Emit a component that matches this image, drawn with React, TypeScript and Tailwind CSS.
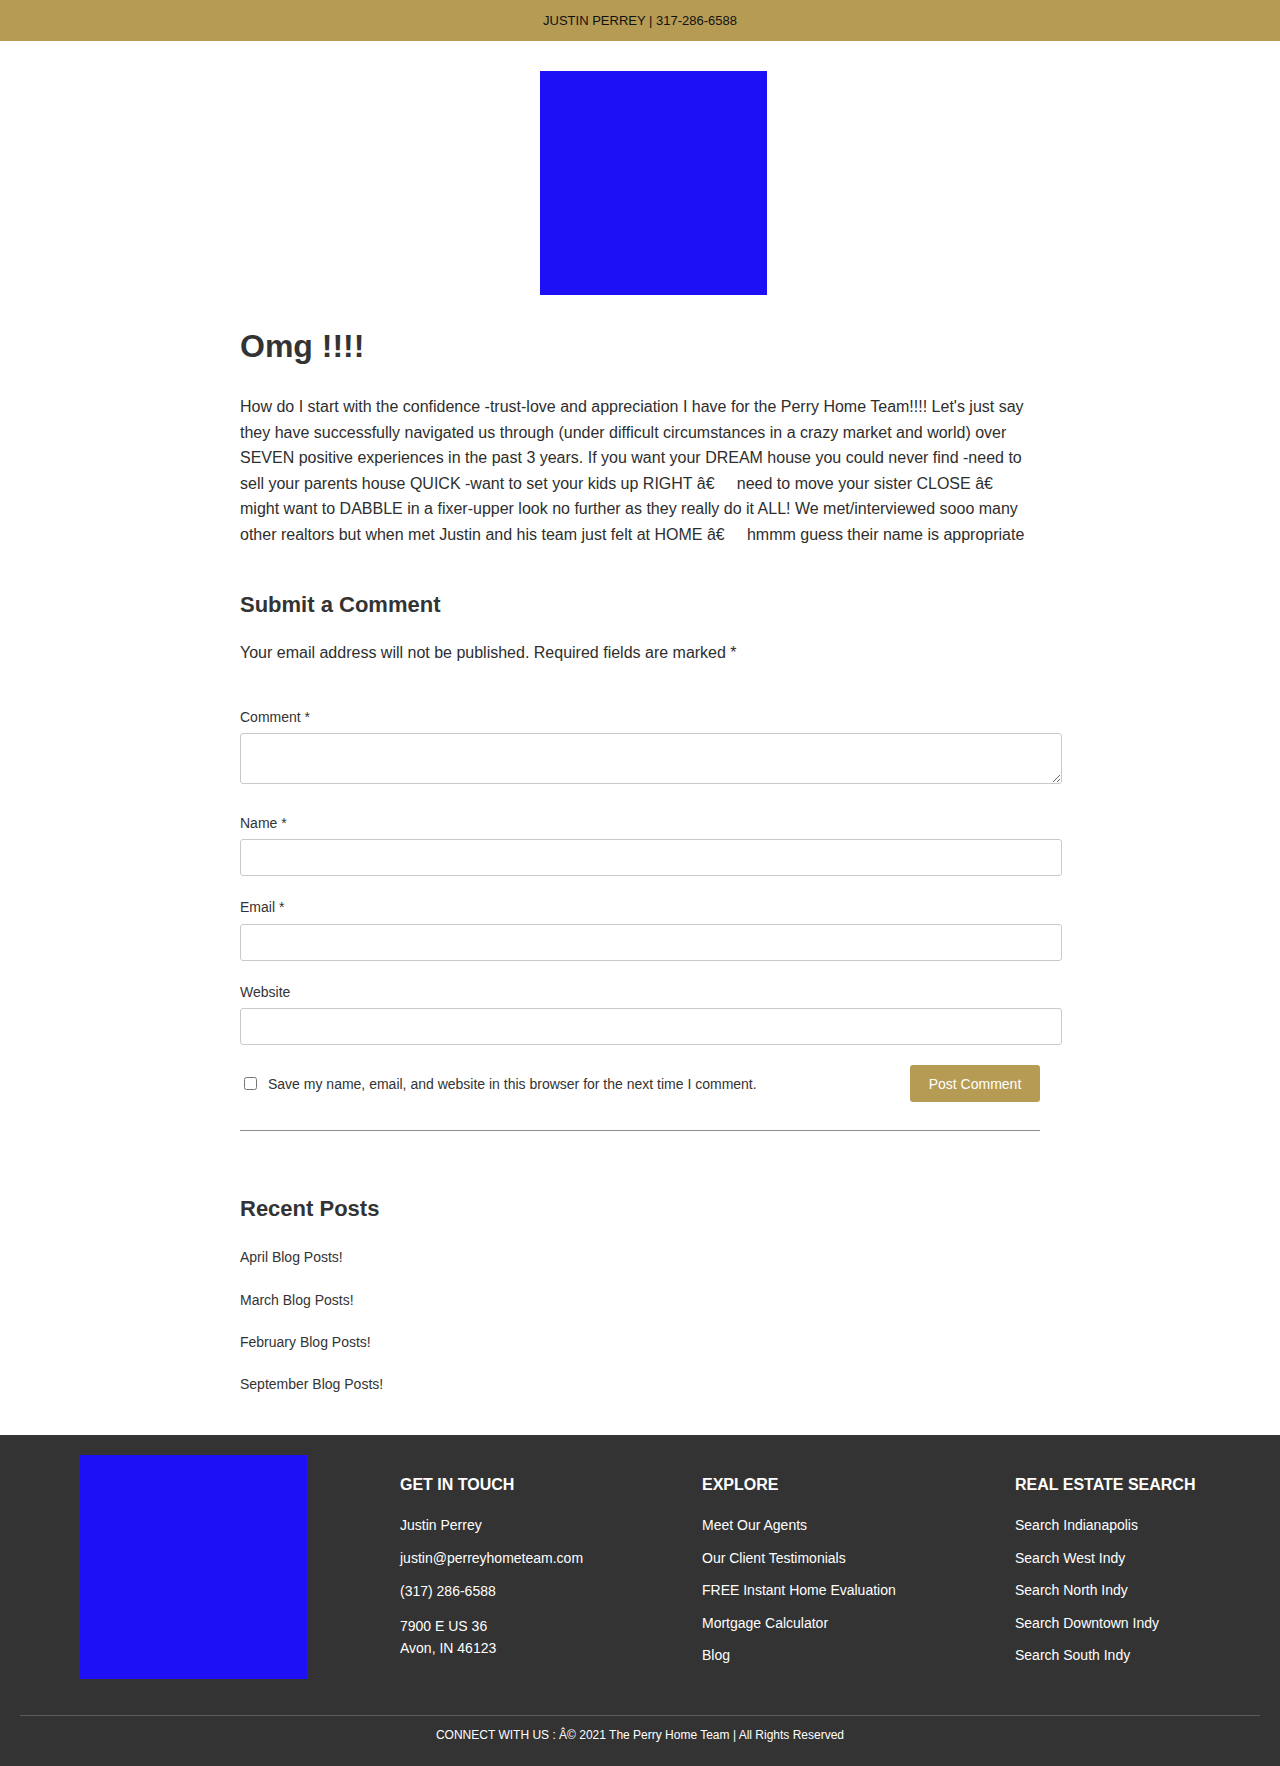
import React from "react";

const NB = "\u00a0\u00a0\u00a0\u00a0";

export default function App() {
  const paraLines = [
    "How do I start with the confidence -trust-love and appreciation I have for the Perry Home Team!!!! Let's just say",
    "they have successfully navigated us through (under difficult circumstances in a crazy market and world) over",
    "SEVEN positive experiences in the past 3 years. If you want your DREAM house you could never find -need to",
    `sell your parents house QUICK -want to set your kids up RIGHT â€${NB} need to move your sister CLOSE â€`,
    "might want to DABBLE in a fixer-upper look no further as they really do it ALL! We met/interviewed sooo many",
    `other realtors but when met Justin and his team just felt at HOME â€${NB} hmmm guess their name is appropriate`,
  ];

  const posts = [
    "April Blog Posts!",
    "March Blog Posts!",
    "February Blog Posts!",
    "September Blog Posts!",
  ];

  const explore = [
    "Meet Our Agents",
    "Our Client Testimonials",
    "FREE Instant Home Evaluation",
    "Mortgage Calculator",
    "Blog",
  ];

  const search = [
    "Search Indianapolis",
    "Search West Indy",
    "Search North Indy",
    "Search Downtown Indy",
    "Search South Indy",
  ];

  const inputCls =
    "block w-[822px] h-[37px] border border-[#c9c9c9] rounded-[3px] bg-white";

  return (
    <div className="font-['Liberation_Sans',Arial,sans-serif] bg-white text-[#333333]">
      {/* Top bar */}
      <div className="h-[41px] bg-[#b69b55] flex items-center justify-center text-[13px] text-[#111111]">
        JUSTIN PERREY | 317-286-6588
      </div>

      {/* Main */}
      <main className="w-[800px] mx-auto pt-[30px] pb-[41px]">
        <div className="ml-[300px] w-[227px] h-[224px] bg-[#1d10f6]" />

        <h1 className="mt-[31px] text-[32px] leading-[40px] font-bold text-[#333333]">
          Omg !!!!
        </h1>

        <p className="mt-[28px] text-[16px] leading-[25.6px] whitespace-nowrap text-[#2e2e2e]">
          {paraLines.map((l, i) => (
            <React.Fragment key={i}>
              {l}
              {i < paraLines.length - 1 && <br />}
            </React.Fragment>
          ))}
        </p>

        <h3 className="mt-[43px] text-[22px] leading-[28px] font-bold">
          Submit a Comment
        </h3>
        <p className="mt-[21px] text-[16px] leading-[25.6px] text-[#2e2e2e]">
          Your email address will not be published. Required fields are marked *
        </p>

        <form className="text-[14px] leading-[20px]">
          <label className="block mt-[42px]">Comment *</label>
          <textarea className="block mt-[6px] w-[822px] h-[51px] border border-[#c9c9c9] rounded-[3px] bg-white" />

          <label className="block mt-[29px]">Name *</label>
          <input type="text" className={"mt-[6px] " + inputCls} />

          <label className="block mt-[21px]">Email *</label>
          <input type="text" className={"mt-[7px] " + inputCls} />

          <label className="block mt-[21px]">Website</label>
          <input type="text" className={"mt-[6px] " + inputCls} />

          <div className="mt-[20px] h-[37px] flex items-center justify-between">
            <div className="flex items-center pl-[4px]">
              <input type="checkbox" className="w-[13px] h-[13px] m-0" />
              <span className="ml-[11px]">
                Save my name, email, and website in this browser for the next time I comment.
              </span>
            </div>
            <button
              type="button"
              className="w-[130px] h-[37px] rounded-[3px] bg-[#b69b55] text-white text-[14px]"
            >
              Post Comment
            </button>
          </div>

          <div className="mt-[28px] border-t border-[#8e8e8e]" />
        </form>

        <h3 className="mt-[64px] text-[22px] leading-[28px] font-bold">
          Recent Posts
        </h3>
        <ul className="mt-[24px] flex flex-col gap-[22.4px] text-[14px] leading-[20px]">
          {posts.map((p) => (
            <li key={p}>{p}</li>
          ))}
        </ul>
      </main>

      {/* Footer */}
      <footer className="bg-[#333333] text-white pt-[20px] px-[20px]">
        <div className="flex pl-[60px]">
          <div className="w-[227px] h-[224px] bg-[#1d10f6] shrink-0" />

          <div className="ml-[93px] w-[302px] pt-[20px] shrink-0">
            <h4 className="text-[16px] leading-[20px] font-bold">GET IN TOUCH</h4>
            <ul className="mt-[19px] flex flex-col gap-[11px] text-[14px] leading-[22px]">
              <li>Justin Perrey</li>
              <li>justin@perreyhometeam.com</li>
              <li>(317) 286-6588</li>
              <li className="mt-[2px]">
                7900 E US 36
                <br />
                Avon, IN 46123
              </li>
            </ul>
          </div>

          <div className="w-[313px] pt-[20px] shrink-0">
            <h4 className="text-[16px] leading-[20px] font-bold">EXPLORE</h4>
            <ul className="mt-[19px] flex flex-col gap-[10.5px] text-[14px] leading-[22px]">
              {explore.map((e) => (
                <li key={e}>{e}</li>
              ))}
            </ul>
          </div>

          <div className="pt-[20px]">
            <h4 className="text-[16px] leading-[20px] font-bold">REAL ESTATE SEARCH</h4>
            <ul className="mt-[19px] flex flex-col gap-[10.5px] text-[14px] leading-[22px]">
              {search.map((e) => (
                <li key={e}>{e}</li>
              ))}
            </ul>
          </div>
        </div>

        <div className="mt-[36px] border-t border-[#5b5b5b]" />
        <div className="pt-[11px] pb-[23px] text-center text-[12px] leading-[16px]">
          CONNECT WITH US : Â© 2021 The Perry Home Team | All Rights Reserved
        </div>
      </footer>
    </div>
  );
}
